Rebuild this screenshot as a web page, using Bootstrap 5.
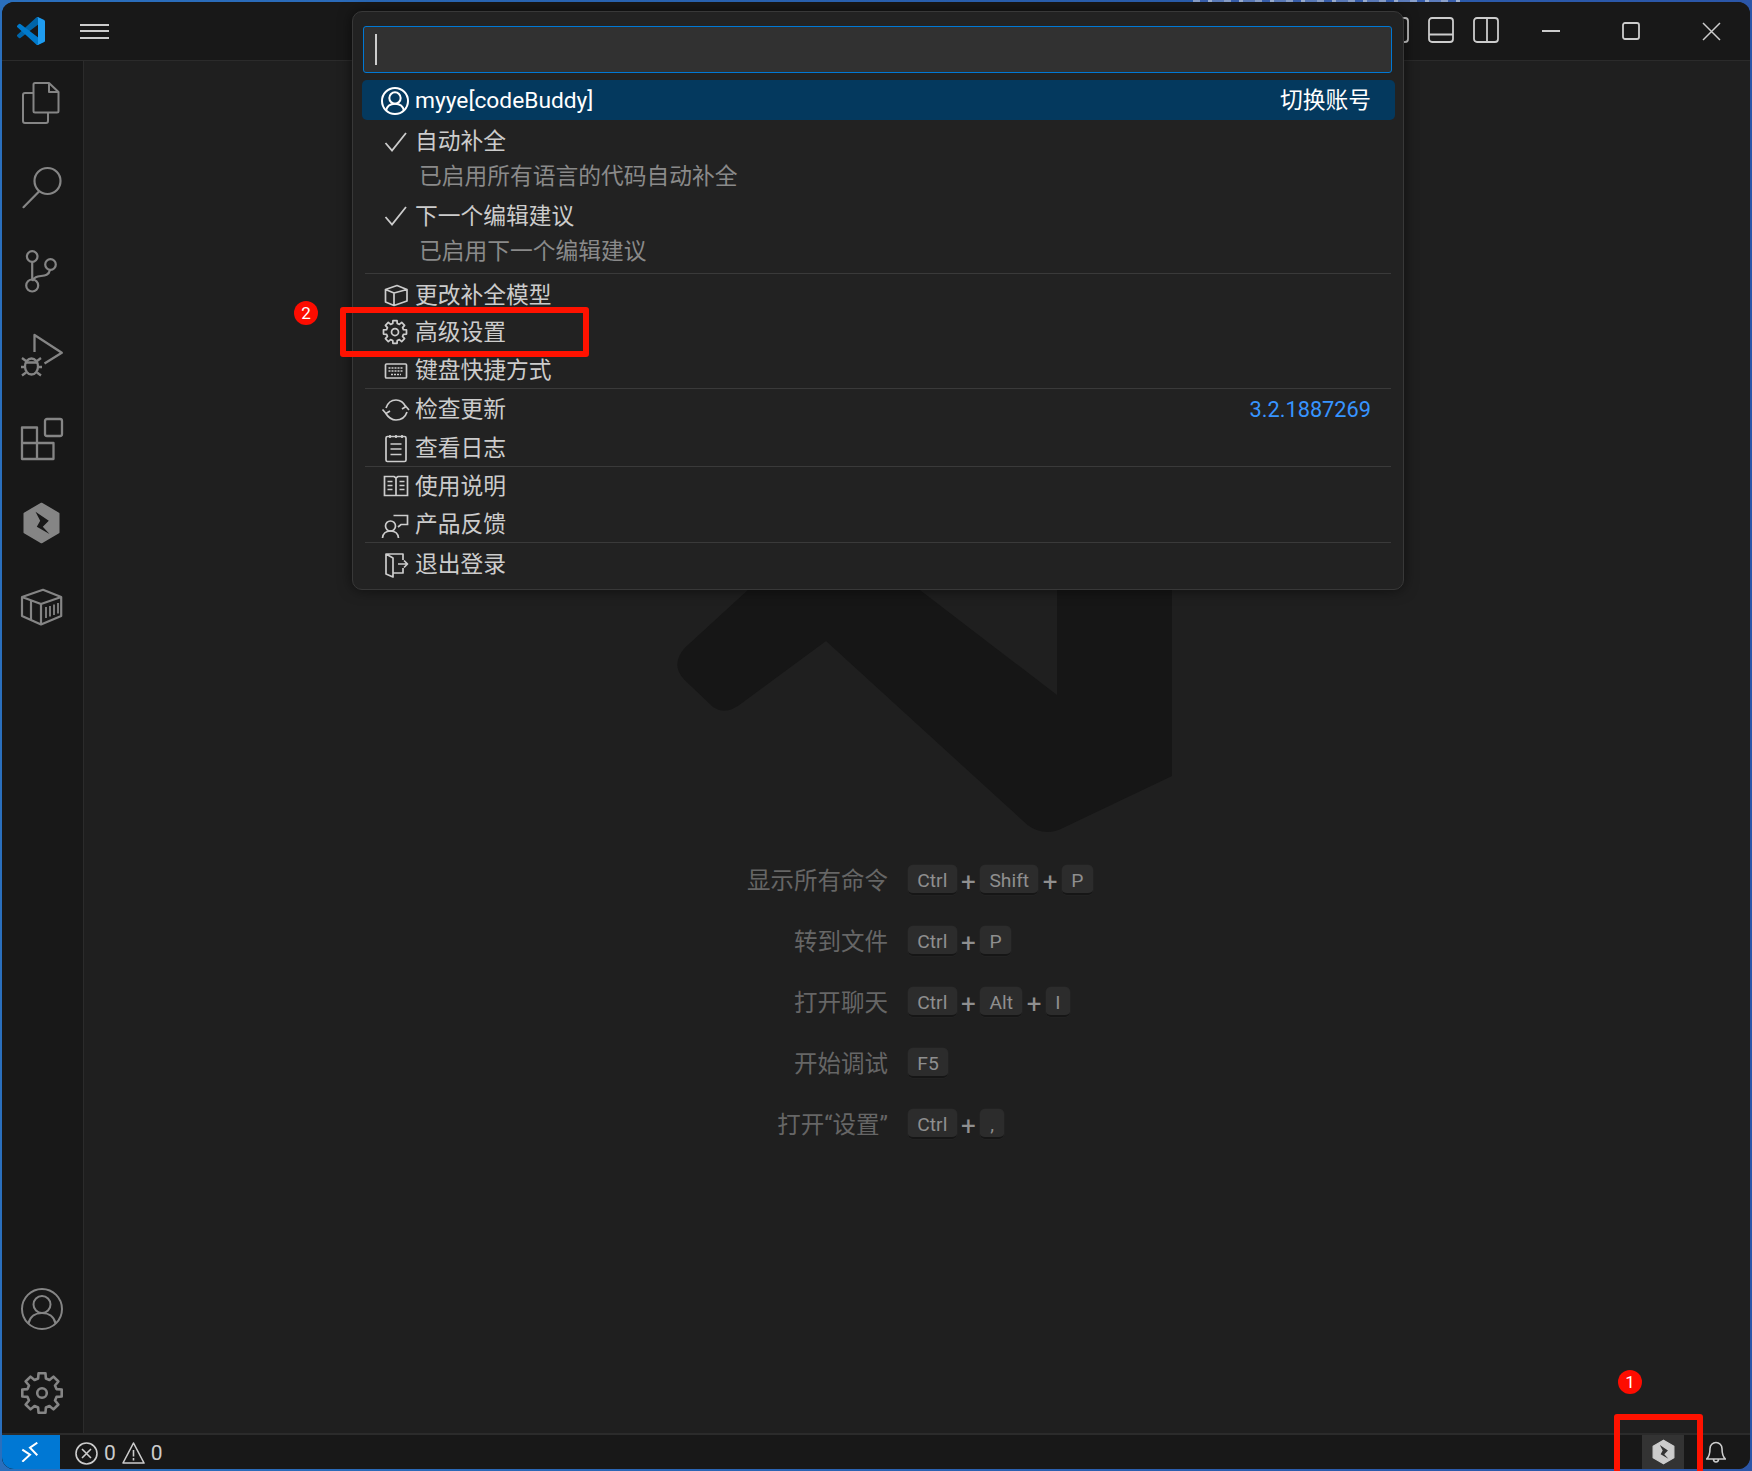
<!doctype html>
<html lang="zh-CN">
<head>
<meta charset="utf-8">
<title>VS Code</title>
<link href="https://cdn.jsdelivr.net/npm/bootstrap@5.3.0/dist/css/bootstrap.min.css" rel="stylesheet">
<style>
html,body{margin:0;background:#2a66b4;}
body{width:1752px;height:1471px;overflow:hidden;font-family:Roboto,"Noto Sans CJK SC",sans-serif;color:#ccc;}
.vs-shell{position:relative;width:1752px;height:1471px;padding:2px;background:linear-gradient(90deg,#2a6fbd,#2b56a8);overflow:hidden;}
.vs-inner{height:100%;background:#1f1f1f;border-radius:12px;overflow:hidden;}
.vs-title{height:59px;background:#181818;border-bottom:1px solid #2b2b2b;flex:none;}
.vs-logo{margin-left:15px;width:28px;height:28px;}
.vs-burger{margin-left:35px;width:29px;height:15px;border-top:2px solid #ccc;border-bottom:2px solid #ccc;position:relative;}
.vs-burger::after{content:"";position:absolute;left:0;right:0;top:4.5px;height:2px;background:#ccc;}
.vs-lay{width:45px;height:59px;padding-bottom:3px;}
.vs-ctl{width:80px;height:59px;}
.vs-main{min-height:0;}
.vs-act{width:82px;background:#181818;border-right:1px solid #2b2b2b;flex:none;padding-right:2px;}
.vs-actitem{height:84px;}
.vs-actlast{margin-bottom:-1.5px;}
.vs-actitem svg,.vs-stat svg,.vs-i svg{overflow:visible;}
.vs-edit{padding-top:788px;min-width:0;}
.vs-srow{height:61px;}
.vs-slabel{width:804px;text-align:right;font-size:23.5px;line-height:30px;padding-top:2px;color:#666;margin-right:20px;flex:none;}
.kb{display:inline-block;height:30px;min-width:24px;text-align:center;line-height:31px;padding:0 9.3px;font-size:19.25px;color:#8f8f8f;background:#2c2c2c;border-radius:5px;border-bottom:2px solid #161616;box-shadow:0 0 0 .5px #262626;}
.kp{width:23.5px;text-align:center;font-size:26px;line-height:30px;color:#8f8f8f;padding-top:4px;}
.vs-status{height:36px;background:#181818;border-top:2px solid #2b2b2b;flex:none;font-size:21px;}
.vs-remote{width:58px;height:34px;background:#0078d4;}
.vs-stat{color:#ccc;line-height:34px;padding-top:2px;}
.vs-cell{width:42px;height:34px;background:#333;}
.vs-qp{position:absolute;left:352px;top:11px;width:1052px;height:579px;background:#222;border:1px solid #383838;border-radius:10px;padding:14px 9px 0;box-shadow:0 0 14px rgba(0,0,0,.55);font-size:22.75px;line-height:35px;}
.vs-input{height:47px;margin:0 2px 0 1px;background:#313131;border:1.5px solid #0078d4;border-radius:3px;padding-top:7px;padding-left:11px;}
.vs-caret{width:2px;height:31px;background:#ccc;}
.vs-rows{margin-top:7px;}
.qrow{height:38.5px;padding:1px 23px 0 19px;}
.qrow.vs-low{padding-top:3px;}
.qrow.vs-lower{padding-top:4px;}
.qrow.vs-sel{height:40px;background:#04395e;color:#fff;border-radius:5px;margin-right:-1px;padding:1px 24px 0 19px;}
.vs-i{width:28px;height:28px;flex:none;margin-right:6px;}
.vs-two{height:76.5px;padding:3px 23px 0 19px;}
.vs-two.vs-first{padding-top:4px;}
.vs-desc{padding-left:38px;color:#8a8a8a;}
.vs-sep{height:1px;margin:0 3px;background:#3a3a3a;}
.vs-ver{color:#3794ff;font-size:21.75px;}
.vs-red{position:absolute;border:6px solid #ff1200;border-radius:3px;}
.vs-num{position:absolute;width:24px;height:24px;border-radius:50%;background:#fd0c00;color:#fff;font-size:17px;line-height:24px;text-align:center;}
.vs-mark{position:absolute;left:0;top:0;}
.vs-blur{position:absolute;left:1193px;top:0;width:267px;height:2px;opacity:.75;background:repeating-linear-gradient(90deg,#aab8d6 0 7px,#3f63b0 7px 15px,#c4cee2 15px 19px,#6d88c2 19px 31px);}
</style>
</head>
<body>
<svg width="0" height="0" class="position-absolute">
<defs>
<path id="g-gear" d="M17.12 6.51 17.53 1.3H24.47L24.88 6.51 28.5 8.01 32.47 4.62 37.38 9.53 33.99 13.5 35.49 17.12 40.7 17.53V24.47L35.49 24.88 33.99 28.5 37.38 32.47 32.47 37.38 28.5 33.99 24.88 35.49 24.47 40.7H17.53L17.12 35.49 13.5 33.99 9.53 37.38 4.62 32.47 8.01 28.5 6.51 24.88 1.3 24.47V17.53L6.51 17.12 8.01 13.5 4.62 9.53 9.53 4.62 13.5 8.01Z"/>
<symbol id="g-hex" viewBox="0 0 41 42">
<path fill="currentColor" stroke="currentColor" stroke-width="2" stroke-linejoin="round" d="M20.5 1.7 37.5 11.5V30.5L20.5 40.3 3.5 30.5V11.5Z"/>
<path fill="var(--bolt)" d="M14.5 9.7 27.8 18.7 21.8 24.7 28.5 32 15.8 24.7 19.2 18.7Z"/>
</symbol>
</defs>
</svg>
<div class="vs-shell">
<div class="vs-inner d-flex flex-column">
  <div class="vs-title d-flex align-items-center">
    <svg class="vs-logo" viewBox="0 0 100 100"><path fill="#0065A9" d="M96.46 10.8 75.86.87a6.23 6.23 0 0 0-7.1 1.21L1.33 63.58a4.16 4.16 0 0 0 0 6.16l5.5 5a4.16 4.16 0 0 0 5.31.24L93.4 13.42a4.13 4.13 0 0 1 6.6 3.2v-.24a6.25 6.25 0 0 0-3.54-5.58z"/><path fill="#007ACC" d="M96.46 89.2 75.86 99.13a6.23 6.23 0 0 1-7.1-1.21L1.33 36.42a4.16 4.16 0 0 1 0-6.16l5.5-5a4.16 4.16 0 0 1 5.31-.24L93.4 86.58a4.13 4.13 0 0 0 6.6-3.2v.24a6.25 6.25 0 0 1-3.54 5.58z"/><path fill="#1F9CF0" d="M75.86 99.13a6.23 6.23 0 0 1-7.1-1.21c2.31 2.31 6.25.67 6.25-2.59V4.67c0-3.26-3.94-4.9-6.25-2.59a6.23 6.23 0 0 1 7.1-1.21l20.6 9.91A6.25 6.25 0 0 1 100 16.38v67.24a6.25 6.25 0 0 1-3.54 5.62z"/></svg>
    <div class="vs-burger"></div>
    <div class="ms-auto d-flex align-items-center" style="margin-right:3px">
      <div class="vs-lay d-flex align-items-center justify-content-center"><svg width="26" height="26" viewBox="0 0 26 26" fill="none" stroke="#ccc" stroke-width="1.8"><rect x="1" y="1" width="24" height="24" rx="3"/><path d="M9 1V25"/></svg></div>
      <div class="vs-lay d-flex align-items-center justify-content-center"><svg width="26" height="26" viewBox="0 0 26 26" fill="none" stroke="#ccc" stroke-width="1.8"><rect x="1" y="1" width="24" height="24" rx="3"/><path d="M1 17.500H25"/></svg></div>
      <div class="vs-lay d-flex align-items-center justify-content-center"><svg width="26" height="26" viewBox="0 0 26 26" fill="none" stroke="#ccc" stroke-width="1.8"><rect x="1" y="1" width="24" height="24" rx="3"/><path d="M14 1V25"/></svg></div>
    </div>
    <div class="vs-ctl d-flex align-items-center justify-content-center"><svg width="18" height="2"><rect width="18" height="2" fill="#ccc"/></svg></div>
    <div class="vs-ctl d-flex align-items-center justify-content-center"><svg width="18" height="18" fill="none" stroke="#ccc" stroke-width="1.8"><rect x="1" y="1" width="16" height="16" rx="2"/></svg></div>
    <div class="vs-ctl d-flex align-items-center justify-content-center" style="margin-right:-1px"><svg width="19" height="19" fill="none" stroke="#ccc" stroke-width="1.5"><path d="M1 1 18 18M18 1 1 18"/></svg></div>
  </div>
  <div class="vs-main flex-grow-1 d-flex">
    <div class="vs-act d-flex flex-column">
      <div class="vs-actitem d-flex align-items-center justify-content-center"><svg width="42" height="42" viewBox="0 0 42 42" fill="none" stroke="#858585" stroke-width="2" stroke-linejoin="round"><path d="M14 1H28L37.5 10V29a1.5 1.5 0 0 1-1.500 1.500H14a1.500 1.500 0 0 1-1.500-1.500V2.500A1.500 1.500 0 0 1 14 1Z"/><path d="M28 1V10H37.500"/><path d="M12.500 11H4a2 2 0 0 0-2 2V39a2 2 0 0 0 2 2H25a2 2 0 0 0 2-2V30.500"/></svg></div>
      <div class="vs-actitem d-flex align-items-center justify-content-center"><svg width="42" height="42" viewBox="0 0 42 42" fill="none" stroke="#858585" stroke-width="2.200"><circle cx="26.500" cy="15" r="13"/><path d="M17.500 26 2.500 41.200" stroke-linecap="round"/></svg></div>
      <div class="vs-actitem d-flex align-items-center justify-content-center"><svg width="42" height="42" viewBox="0 0 42 42" fill="none" stroke="#858585" stroke-width="2.200"><circle cx="11.200" cy="6.500" r="5.300"/><circle cx="29.500" cy="14.500" r="5.300"/><circle cx="11.200" cy="35.500" r="6"/><path d="M11.200 12V29.500M29 20C28 25 24 25.500 20 26S13 27 11.200 31"/></svg></div>
      <div class="vs-actitem d-flex align-items-center justify-content-center"><svg width="42" height="42" viewBox="0 0 42 42" fill="none" stroke="#858585" stroke-width="2.300" stroke-linejoin="round"><path d="M13.500 18V1L40.800 18.800 23.500 29.500"/><ellipse cx="10.500" cy="32.500" rx="6.500" ry="8"/><path d="M5 27 1 24M16 27 20 24M4 33H0M17 33H21M5 38.500 1 41.500M16 38.500 20 41.500M4.500 28.500H16.500"/></svg></div>
      <div class="vs-actitem d-flex align-items-center justify-content-center"><svg width="42" height="42" viewBox="0 0 42 42" fill="none" stroke="#858585" stroke-width="2.300" stroke-linejoin="round"><rect x="24" y="1" width="17" height="17" rx="2"/><path d="M1 9.500H16V25H32.500V41H1ZM1 25H16V41"/></svg></div>
      <div class="vs-actitem d-flex align-items-center justify-content-center"><svg width="41" height="42" style="color:#858585;--bolt:#181818"><use href="#g-hex"/></svg></div>
      <div class="vs-actitem d-flex align-items-center justify-content-center"><svg width="42" height="42" viewBox="0 0 42 42" fill="none" stroke="#858585" stroke-width="2.200" stroke-linejoin="round"><path d="M22 3.800 40.200 11V30L20 38.500 1 30V11ZM1 11 20 18 40.200 11M20 18V38.500M10 14.500V34.500"/><path d="M25 21V32M29 20V30.500M33 18.500V29M37 17V27.500" stroke-width="1.800"/></svg></div>
      <div class="mt-auto"></div>
      <div class="vs-actitem d-flex align-items-center justify-content-center"><svg width="42" height="42" viewBox="0 0 42 42" fill="none" stroke="#858585" stroke-width="2"><circle cx="21" cy="21" r="20"/><circle cx="21" cy="16.500" r="8.500"/><path d="M7.500 35.500C9 28 15 25 21 25S33 28 34.500 35.500"/></svg></div>
      <div class="vs-actitem vs-actlast d-flex align-items-center justify-content-center"><svg width="42" height="42" viewBox="0 0 42 42" fill="none" stroke="#858585" stroke-width="2.600" stroke-linejoin="round"><use href="#g-gear"/><circle cx="21" cy="21" r="4.800"/></svg></div>
    </div>
    <div class="vs-edit flex-grow-1">
      <div class="vs-srow d-flex align-items-center"><div class="vs-slabel">显示所有命令</div><span class="kb">Ctrl</span><span class="kp">+</span><span class="kb">Shift</span><span class="kp">+</span><span class="kb">P</span></div>
      <div class="vs-srow d-flex align-items-center"><div class="vs-slabel">转到文件</div><span class="kb">Ctrl</span><span class="kp">+</span><span class="kb">P</span></div>
      <div class="vs-srow d-flex align-items-center"><div class="vs-slabel">打开聊天</div><span class="kb">Ctrl</span><span class="kp">+</span><span class="kb">Alt</span><span class="kp">+</span><span class="kb">I</span></div>
      <div class="vs-srow d-flex align-items-center"><div class="vs-slabel">开始调试</div><span class="kb">F5</span></div>
      <div class="vs-srow d-flex align-items-center"><div class="vs-slabel">打开“设置”</div><span class="kb">Ctrl</span><span class="kp">+</span><span class="kb">,</span></div>
    </div>
  </div>
  <div class="vs-status d-flex align-items-center">
    <div class="vs-remote d-flex align-items-center justify-content-center"><svg width="20" height="20" viewBox="0 0 20 20" fill="none" stroke="#fff" stroke-width="2"><path d="M1.300 7.700 9 12.700 1.300 19.700M16.300.7 9 5.700 16.300 13.300"/></svg></div>
    <div class="vs-stat d-flex align-items-center" style="margin-left:15px">
      <svg width="23" height="23" viewBox="0 0 23 23" fill="none" stroke="#ccc" stroke-width="1.600"><circle cx="11.500" cy="11.500" r="10.500"/><path d="M7 7 16 16M16 7 7 16"/></svg>
      <span style="margin-left:6px">0</span>
      <svg style="margin-left:6px" width="23" height="22" viewBox="0 0 23 22" fill="none" stroke="#ccc" stroke-width="1.600" stroke-linejoin="round"><path d="M11.500 1 22 21H1Z"/><path d="M11.500 8V14.500M11.500 16V18.500"/></svg>
      <span style="margin-left:6px">0</span>
    </div>
    <div class="ms-auto vs-cell d-flex align-items-center justify-content-center"><svg width="25" height="26" style="color:#ccc;--bolt:#333"><use href="#g-hex"/></svg></div>
    <div class="d-flex align-items-center justify-content-center" style="width:22px;margin-left:21px;margin-right:23px"><svg width="20" height="24" viewBox="0 0 20 24" fill="none" stroke="#ccc" stroke-width="1.600"><path d="M.5 19H19.500C17 17 16 14 16 8.500A6 6 0 0 0 4 8.500C4 14 3 17 .5 19ZM7.500 19C7.500 23 12.500 23 12.500 19"/></svg></div>
  </div>
</div>
<svg class="vs-mark" width="1752" height="1471"><path fill="#161616" d="M749 589 684.600 648Q670 665 684.600 680L713 707Q726 716 742 703L826 641 1027.500 825Q1045 838 1065 827L1172 776V400H1057V695L918.600 589 850 540Z"/></svg>
<div class="vs-blur"></div>
<div class="vs-qp">
  <div class="vs-input"><div class="vs-caret"></div></div>
  <div class="vs-rows">
    <div class="qrow vs-sel d-flex align-items-center"><span class="vs-i d-flex"><svg width="28" height="28" viewBox="0 0 42 42" fill="none" stroke="#fff" stroke-width="3"><circle cx="21" cy="21" r="19.500"/><circle cx="21" cy="16.500" r="8.500"/><path d="M7.500 35.500C9 28 15 25 21 25S33 28 34.500 35.500"/></svg></span><span>myye[codeBuddy]</span><span class="ms-auto">切换账号</span></div>
    <div class="vs-two vs-first">
      <div class="d-flex align-items-center"><span class="vs-i d-flex"><svg width="28" height="28" fill="none" stroke="#ccc" stroke-width="1.800"><path d="M4.500 15 11 22.500 25 5"/></svg></span><span>自动补全</span></div>
      <div class="vs-desc">已启用所有语言的代码自动补全</div>
    </div>
    <div class="vs-two" style="margin-top:-1px;height:77.5px">
      <div class="d-flex align-items-center"><span class="vs-i d-flex"><svg width="28" height="28" fill="none" stroke="#ccc" stroke-width="1.800"><path d="M4.500 15 11 22.500 25 5"/></svg></span><span>下一个编辑建议</span></div>
      <div class="vs-desc">已启用下一个编辑建议</div>
    </div>
    <div class="vs-sep"></div>
    <div class="qrow vs-lower d-flex align-items-center"><span class="vs-i d-flex"><svg width="28" height="28" fill="none" stroke="#ccc" stroke-width="1.700" stroke-linejoin="round"><path d="M4.500 8.500 16 4.500 26 8.500V20L13 24.500 4.500 21ZM4.500 8.500 13 12 26 8.500M13 12V24.500"/></svg></span><span>更改补全模型</span></div>
    <div class="qrow d-flex align-items-center"><span class="vs-i d-flex"><svg width="28" height="28" viewBox="-3 -3 48 48" fill="none" stroke="#ccc" stroke-width="3" stroke-linejoin="round"><use href="#g-gear"/><circle cx="21" cy="21" r="6"/></svg></span><span>高级设置</span></div>
    <div class="qrow d-flex align-items-center"><span class="vs-i d-flex"><svg width="28" height="28" fill="none" stroke="#ccc" stroke-width="1.700"><rect x="4.500" y="7" width="21" height="14" rx="1"/><path d="M7.500 11H22.500M7.500 14H22.500M10 17.500H20" stroke-dasharray="2 1"/></svg></span><span>键盘快捷方式</span></div>
    <div class="vs-sep" style="margin-top:-1.500px"></div>
    <div class="qrow vs-low d-flex align-items-center"><span class="vs-i d-flex"><svg width="28" height="28" fill="none" stroke="#ccc" stroke-width="1.700"><path d="M5 12C7 6 11 4 15 4S23 7 25 11M26 16C24 22 20 24 15 24S7 21 4.500 17M1.500 13.500 5 17.500 9 15M28 14 25 10.500 21 13"/></svg></span><span>检查更新</span><span class="ms-auto vs-ver">3.2.1887269</span></div>
    <div class="qrow vs-low d-flex align-items-center"><span class="vs-i d-flex"><svg width="28" height="28" fill="none" stroke="#ccc" stroke-width="1.700"><rect x="5" y="2.500" width="20" height="25" rx="1.500"/><path d="M9 1V4M15 1V4M21 1V4M9.500 10H20.500M9.500 15H20.500M9.500 20.500H20.500"/></svg></span><span>查看日志</span></div>
    <div class="vs-sep" style="margin-top:-.5px"></div>
    <div class="qrow d-flex align-items-center"><span class="vs-i d-flex"><svg width="28" height="28" fill="none" stroke="#ccc" stroke-width="1.700"><path d="M3.500 4.500H13L15 6 17 4.500H26.500V23.500H3.500ZM15 6V23.500M6.500 9.500H11.500M6.500 13.500H11.500M6.500 17.500H11.500M18.500 9.500H23.500M18.500 13.500H23.500M18.500 17.500H23.500"/></svg></span><span>使用说明</span></div>
    <div class="qrow d-flex align-items-center"><span class="vs-i d-flex"><svg width="28" height="28" fill="none" stroke="#ccc" stroke-width="1.700"><circle cx="9.500" cy="15" r="5"/><path d="M1.500 27C2 22 5 20 9.500 20S17 22 17.500 27M12.500 4.500H26.500V13.500H20L17 16"/></svg></span><span>产品反馈</span></div>
    <div class="vs-sep" style="margin-top:-1.500px"></div>
    <div class="qrow vs-lower d-flex align-items-center"><span class="vs-i d-flex"><svg width="28" height="28" fill="none" stroke="#ccc" stroke-width="1.700" stroke-linejoin="round"><path d="M22 10V4H5V24L12 27V8L5 4M12 23H22V18M17 14H26.500M23 10.500 26.500 14 23 17.500"/></svg></span><span>退出登录</span></div>
  </div>
</div>
<div class="vs-red" style="left:340px;top:307px;width:249px;height:50px"></div>
<div class="vs-red" style="left:1614px;top:1414px;width:89px;height:70px"></div>
<div class="vs-num" style="left:294px;top:301px">2</div>
<div class="vs-num" style="left:1618px;top:1370px">1</div>
</div>
</body>
</html>
